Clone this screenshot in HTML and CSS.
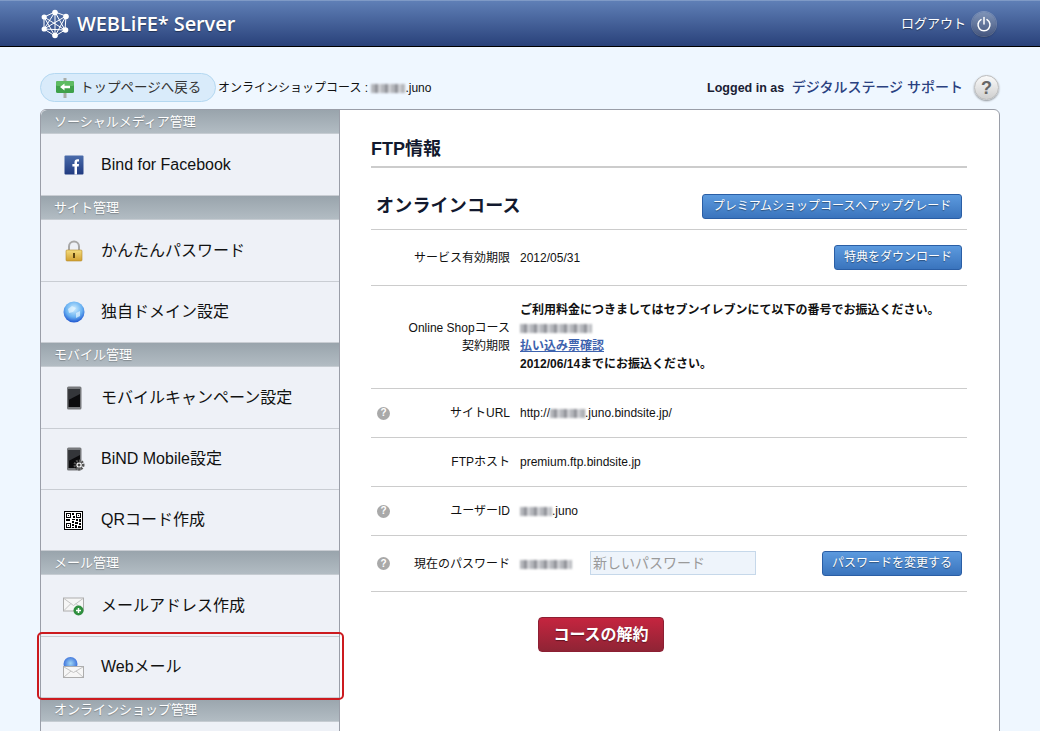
FILE: index.html
```html
<!DOCTYPE html>
<html lang="ja">
<head>
  <meta charset="UTF-8" />
  <meta name="viewport" content="width=device-width, initial-scale=1.0" />
  <title>WEBLiFE* Server</title>
  <link rel="stylesheet" href="styles.css">
</head>
<body>

  <!-- Barra superior -->
  <header class="topbar">
    <a class="logo" href="#">
      <svg class="logo-icon" width="29" height="30" viewBox="0 0 29 30">
        <g stroke="#fff" stroke-width="1" fill="none">
          <path d="M3 8 L14 3 L25 7 L24 21 L14 27 L3 20 Z"/>
          <path d="M3 8 L14 27 L25 7 L3 20 L24 21 L3 8"/>
          <path d="M14 3 L14 27 M14 3 L3 20 M14 3 L24 21"/>
        </g>
        <g fill="#fff">
          <circle cx="14" cy="3.5" r="2.8"/>
          <circle cx="25" cy="7.5" r="2.8"/>
          <circle cx="3.2" cy="8" r="2.6"/>
          <circle cx="24.5" cy="21" r="2.8"/>
          <circle cx="3.2" cy="20" r="2.6"/>
          <circle cx="14" cy="26.5" r="2.8"/>
        </g>
      </svg>
      <span class="logo-text">WEBLiFE* Server</span>
    </a>
    <a class="logout" href="#">
      <span>ログアウト</span>
      <span class="logout-btn">
        <svg width="16" height="16" viewBox="0 0 16 16" fill="none" stroke="#fff" stroke-width="1.5" stroke-linecap="round">
          <path d="M5 3.6 A6 6 0 1 0 11 3.6"/>
          <path d="M8 1.5 V8"/>
        </svg>
      </span>
    </a>
  </header>

  <div class="pagina">

    <!-- Linea de usuario -->
    <div class="barra-usuario">
      <a class="btn-volver" href="#">
        <svg width="20" height="20" viewBox="0 0 20 20">
          <rect x="8.5" y="0" width="3" height="20" fill="#a9aca6"/>
          <rect x="1" y="3" width="18" height="12" rx="1.5" fill="#3fa14a"/>
          <rect x="1" y="3" width="18" height="5" rx="1.5" fill="#5dbb62"/>
          <path d="M5 9 L9.5 5.5 V7.8 H15 V10.2 H9.5 V12.5 Z" fill="#fff"/>
        </svg>
        <span>トップページへ戻る</span>
      </a>
      <span class="curso-actual">オンラインショップコース : <span class="borroso b-nombre"></span>.juno</span>
      <span class="logged">Logged in as <a href="#">デジタルステージ サポート</a></span>
      <a class="ayuda-grande" href="#">?</a>
    </div>

    <div class="panel">

      <!-- Menu lateral -->
      <nav class="menu">
        <h3 class="menu-titulo">ソーシャルメディア管理</h3>
        <a class="menu-item" href="#">
          <svg class="menu-icono" width="22" height="22" viewBox="0 0 22 22">
            <defs><linearGradient id="fb" x1="0" y1="0" x2="0" y2="1"><stop offset="0" stop-color="#4a6cab"/><stop offset="1" stop-color="#203a80"/></linearGradient></defs>
            <rect x="1.5" y="1.5" width="19" height="19" rx="1" fill="url(#fb)"/>
            <path d="M11.5 20.5 V12.5 H9.4 V10 H11.5 V8.2 C11.5 6.2 12.7 5.2 14.4 5.2 L16 5.3 V7.6 H14.9 C14.1 7.6 14 8 14 8.6 V10 H16 L15.7 12.5 H14 V20.5 Z" fill="#fff"/>
          </svg>
          <span>Bind for Facebook</span>
        </a>

        <h3 class="menu-titulo">サイト管理</h3>
        <a class="menu-item" href="#">
          <svg class="menu-icono" width="22" height="24" viewBox="0 0 22 24">
            <defs><linearGradient id="candado" x1="0" y1="0" x2="0" y2="1"><stop offset="0" stop-color="#f4dc7d"/><stop offset="1" stop-color="#d1a030"/></linearGradient></defs>
            <path d="M6 11 V7.5 A5 5 0 0 1 16 7.5 V11" fill="none" stroke="#a8a8a8" stroke-width="2"/>
            <rect x="3" y="11" width="16" height="11" rx="1" fill="url(#candado)" stroke="#b58a2a" stroke-width=".6"/>
            <rect x="10" y="14" width="2" height="5" fill="#5b4410"/>
          </svg>
          <span>かんたんパスワード</span>
        </a>
        <a class="menu-item" href="#">
          <svg class="menu-icono" width="22" height="22" viewBox="0 0 22 22">
            <defs><radialGradient id="globo" cx=".5" cy=".35" r=".65"><stop offset="0" stop-color="#cfeeff"/><stop offset=".6" stop-color="#69b2f2"/><stop offset="1" stop-color="#1f56d0"/></radialGradient></defs>
            <circle cx="11" cy="11" r="10.5" fill="url(#globo)"/>
            <path d="M5 8 L9 5 L13 7 L10 11 L6 12 Z M13 12 L17 10 L17 15 L13 17 Z" fill="#e6f5ff" opacity=".7"/>
          </svg>
          <span>独自ドメイン設定</span>
        </a>

        <h3 class="menu-titulo">モバイル管理</h3>
        <a class="menu-item" href="#">
          <svg class="menu-icono" width="22" height="24" viewBox="0 0 22 24">
            <rect x="4" y="0.5" width="14.5" height="23" rx="1.5" fill="#77797c"/>
            <rect x="5.5" y="3" width="11.5" height="18" fill="#0b0b0d"/>
            <path d="M5.5 3 H17 V8 L5.5 14 Z" fill="#34363a"/>
          </svg>
          <span>モバイルキャンペーン設定</span>
        </a>
        <a class="menu-item" href="#">
          <svg class="menu-icono" width="22" height="24" viewBox="0 0 22 24">
            <rect x="4" y="0.5" width="14.5" height="23" rx="1.5" fill="#77797c"/>
            <rect x="5.5" y="3" width="11.5" height="18" fill="#0b0b0d"/>
            <path d="M5.5 3 H17 V8 L5.5 14 Z" fill="#34363a"/>
            <circle cx="16" cy="18" r="4" fill="none" stroke="#555" stroke-width="3" stroke-dasharray="1.6 1"/>
            <circle cx="16" cy="18" r="2.6" fill="#fff"/>
            <circle cx="16" cy="18" r="1.5" fill="#444"/>
          </svg>
          <span>BiND Mobile設定</span>
        </a>
        <a class="menu-item" href="#">
          <svg class="menu-icono menu-icono-qr" width="19" height="19" viewBox="0 0 19 19" shape-rendering="crispEdges">
            <rect width="19" height="19" fill="#000"/>
            <rect x="1" y="1" width="17" height="17" fill="#fff"/>
            <path d="M2 2 H7 V7 H2 Z M3 3 V6 H6 V3 Z M12 2 H17 V7 H12 Z M13 3 V6 H16 V3 Z M2 12 H7 V17 H2 Z M3 13 V16 H6 V13 Z" fill="#000" fill-rule="evenodd"/>
            <path d="M4 4 H5 V5 H4 Z M14 4 H15 V5 H14 Z M4 14 H5 V15 H4 Z M8 2 H10 V4 H8 Z M9 5 H11 V7 H9 Z M8 8 H11 V9 H8 Z M2 8 H6 V10 H2 Z M12 8 H14 V10 H12 Z M15 8 H17 V11 H15 Z M8 10 H10 V12 H8 Z M11 11 H14 V13 H11 Z M8 13 H10 V15 H8 Z M15 12 H17 V14 H15 Z M11 14 H13 V17 H11 Z M14 15 H17 V17 H14 Z M8 16 H10 V17 H8 Z" fill="#000"/>
          </svg>
          <span>QRコード作成</span>
        </a>

        <h3 class="menu-titulo">メール管理</h3>
        <a class="menu-item" href="#">
          <svg class="menu-icono" width="22" height="22" viewBox="0 0 22 22">
            <rect x="0.5" y="3" width="20" height="13" fill="#f6f6f6" stroke="#adadad"/>
            <path d="M1 3.5 L10.5 10.5 L20 3.5 M1 15.5 L8 8.5 M20 15.5 L13 8.5" fill="none" stroke="#c4c4c4"/>
            <circle cx="15.5" cy="15.5" r="5" fill="#2f8f3f"/>
            <path d="M13 15.5 H18 M15.5 13 V18" stroke="#fff" stroke-width="1.5"/>
          </svg>
          <span>メールアドレス作成</span>
        </a>
        <a class="menu-item menu-item-activo" href="#">
          <svg class="menu-icono" width="22" height="22" viewBox="0 0 22 22">
            <defs><radialGradient id="globo2" cx=".5" cy=".45" r=".6"><stop offset="0" stop-color="#9fd6f5"/><stop offset="1" stop-color="#2a5fd6"/></radialGradient></defs>
            <circle cx="7.5" cy="8" r="7" fill="url(#globo2)"/>
            <rect x="0.5" y="10.5" width="20" height="11" fill="#f6f6f6" stroke="#adadad"/>
            <path d="M1 11 L10.5 16.5 L20 11 M1 21 L8 15 M20 21 L13 15" fill="none" stroke="#c4c4c4"/>
          </svg>
          <span>Webメール</span>
        </a>

        <h3 class="menu-titulo">オンラインショップ管理</h3>
        <div class="menu-item"></div>
      </nav>

      <!-- Contenido -->
      <main class="contenido">
        <h1 class="titulo-pagina">FTP情報</h1>

        <div class="curso-cabecera">
          <h2>オンラインコース</h2>
          <a class="btn-azul btn-mejora" href="#">プレミアムショップコースへアップグレード</a>
        </div>

        <div class="fila fila-servicio">
          <span class="etiqueta">サービス有効期限</span>
          <span class="valor">2012/05/31</span>
          <a class="btn-azul" href="#">特典をダウンロード</a>
        </div>

        <div class="fila fila-contrato">
          <span class="etiqueta">Online Shopコース<br>契約期限</span>
          <div class="valor aviso">
            <strong>ご利用料金につきましてはセブンイレブンにて以下の番号でお振込ください。</strong><br>
            <span class="borroso b-numero"></span><br>
            <a href="#">払い込み票確認</a><br>
            <strong>2012/06/14までにお振込ください。</strong>
          </div>
        </div>

        <div class="fila">
          <span class="ayuda">?</span>
          <span class="etiqueta">サイトURL</span>
          <span class="valor">http://<span class="borroso b-sitio"></span>.juno.bindsite.jp/</span>
        </div>

        <div class="fila">
          <span class="etiqueta">FTPホスト</span>
          <span class="valor">premium.ftp.bindsite.jp</span>
        </div>

        <div class="fila">
          <span class="ayuda">?</span>
          <span class="etiqueta">ユーザーID</span>
          <span class="valor"><span class="borroso b-usuario"></span>.juno</span>
        </div>

        <div class="fila fila-clave">
          <span class="ayuda">?</span>
          <span class="etiqueta">現在のパスワード</span>
          <span class="valor"><span class="borroso b-clave"></span></span>
          <input class="campo-clave" type="text" placeholder="新しいパスワード">
          <a class="btn-azul" href="#">パスワードを変更する</a>
        </div>

        <div class="acciones">
          <a class="btn-rojo" href="#">コースの解約</a>
        </div>
      </main>
    </div>
  </div>

</body>
</html>
```

FILE: styles.css
```css
* {
  box-sizing: border-box;
}

html, body {
  height: 731px;
  overflow: hidden;
}

body {
  margin: 0;
  background-color: #eff7ff;
  color: #111;
  font-family: "Liberation Sans", "Noto Sans CJK JP", sans-serif;
  font-size: 12px;
  line-height: 18px;
}

a {
  color: inherit;
  text-decoration: none;
}

/* Barra superior */
.topbar {
  display: flex;
  align-items: center;
  justify-content: space-between;
  height: 47px;
  padding: 0 44px 0 41px;
  background: linear-gradient(#5f7fb6, #29417a);
  border-top: 1px solid #7f9ac6;
  border-bottom: 1px solid #000;
  color: #fff;
}

.logo {
  display: flex;
  align-items: center;
  gap: 7px;
}

.logo-text {
  font-family: "Open Sans", sans-serif;
  font-size: 20px;
  font-weight: 600;
  line-height: 26px;
  letter-spacing: -0.1px;
  text-shadow: 0 1px 1px rgba(0,0,0,0.4);
}

.logout {
  display: flex;
  align-items: center;
  gap: 6px;
  font-size: 13px;
  text-shadow: 0 1px 1px rgba(0,0,0,0.4);
}

.logout-btn {
  display: flex;
  align-items: center;
  justify-content: center;
  width: 24px;
  height: 24px;
  border-radius: 50%;
  background: linear-gradient(#7f94b8, #46577f);
  box-shadow: 0 0 0 1px rgba(255,255,255,0.25), 0 1px 2px rgba(0,0,0,0.5);
}

/* Linea de usuario */
.pagina {
  height: 684px;
  padding: 26px 40px 0 40px;
  overflow: hidden;
}

.barra-usuario {
  display: flex;
  align-items: center;
  height: 29px;
  margin-bottom: 7px;
}

.btn-volver {
  display: flex;
  align-items: center;
  gap: 5px;
  width: 176px;
  height: 29px;
  padding-left: 14px;
  border: 1px solid #b4d8f1;
  border-radius: 15px;
  background-color: #d9ebfa;
  color: #333;
  font-size: 13.5px;
}

.curso-actual {
  margin-left: 2px;
  font-size: 12px;
}

.logged {
  margin-left: auto;
  font-size: 12.5px;
  font-weight: bold;
  color: #1a2033;
}

.logged a {
  margin-left: 4px;
  font-weight: 500;
  font-size: 14px;
  color: #2a4180;
}

.ayuda-grande {
  display: flex;
  align-items: center;
  justify-content: center;
  width: 25px;
  height: 25px;
  margin-left: 11px;
  margin-right: 1px;
  border: 1px solid #bbb;
  border-radius: 50%;
  background: linear-gradient(#fafafa, #cfcfcf);
  box-shadow: 0 1px 2px rgba(0,0,0,0.4);
  color: #666;
  font-size: 18px;
  font-weight: bold;
}

/* Pixelado de datos ocultos */
.borroso {
  display: inline-block;
  height: 9px;
  vertical-align: -1px;
  background: repeating-linear-gradient(90deg, #b4b6bb 0 4px, #8f9197 4px 7px, #d1d2d6 7px 10px);
  filter: blur(0.8px);
}

.b-nombre { width: 34px; }
.b-numero { width: 72px; }
.b-sitio { width: 35px; }
.b-usuario { width: 32px; }
.b-clave { width: 52px; }

/* Panel principal */
.panel {
  display: flex;
  width: 960px;
  height: 700px;
  border: 1px solid #9a9ea8;
  border-radius: 6px;
  background-color: #fff;
}

.menu {
  width: 299px;
  flex-shrink: 0;
  border-right: 1px solid #9a9ea8;
  background-color: #eef1f7;
  border-radius: 6px 0 0 0;
}

.menu-titulo {
  height: 24px;
  margin: 0;
  padding-left: 13px;
  background: linear-gradient(#99a4ac, #b2bcc3);
  border-bottom: 1px solid #c6ccd2;
  color: #fff;
  font-size: 13px;
  font-weight: normal;
  line-height: 24px;
  text-shadow: 0 1px 1px rgba(0,0,0,0.25);
}

.menu-titulo:first-child {
  border-radius: 6px 0 0 0;
}

.menu-item {
  display: flex;
  align-items: center;
  height: 61px;
  padding-left: 22px;
  border-bottom: 1px solid #c9cdd3;
  color: #111;
  font-size: 16px;
  line-height: 20px;
}

.menu-titulo + .menu-item {
  height: 62px;
}

.menu-icono {
  flex-shrink: 0;
  margin-right: 16px;
}

.menu-icono-qr {
  margin-left: 1px;
  margin-right: 18px;
}

.menu-item-activo {
  position: relative;
}

/* Recuadro rojo sobre la opcion */
.menu-item-activo::after {
  content: "";
  position: absolute;
  top: -5px;
  left: -4px;
  right: -5px;
  bottom: -3px;
  border: 2px solid #cc1a1f;
  border-radius: 5px;
}

/* Contenido */
.contenido {
  flex: 1;
  padding: 24px 32px 0 31px;
}

.titulo-pagina {
  height: 34px;
  margin: 0;
  border-bottom: 2px solid #ccc;
  color: #12192e;
  font-size: 18px;
  line-height: 30px;
}

.curso-cabecera {
  display: flex;
  align-items: center;
  justify-content: space-between;
  height: 62px;
  padding: 15px 5px 0 5px;
  border-bottom: 1px solid #ccc;
}

.curso-cabecera h2 {
  margin: 0;
  color: #12192e;
  font-size: 18px;
  line-height: 24px;
  letter-spacing: 0.2px;
}

.btn-azul {
  display: inline-block;
  height: 25px;
  padding: 0 9px;
  border: 1px solid #2a5ea5;
  border-radius: 3px;
  background: linear-gradient(#5c9ade, #3a74bd);
  color: #fff;
  font-size: 12px;
  line-height: 23px;
  text-align: center;
  text-shadow: 0 1px 1px rgba(0,0,0,0.4);
  white-space: nowrap;
}

.btn-mejora {
  width: 260px;
}

.fila {
  display: flex;
  align-items: center;
  position: relative;
  height: 49px;
  padding-right: 5px;
  border-bottom: 1px solid #ccc;
  font-size: 12px;
}

.fila .btn-azul {
  margin-left: auto;
}

.etiqueta {
  width: 139px;
  flex-shrink: 0;
  text-align: right;
}

.ayuda + .etiqueta {
  width: 108px;
}

.valor {
  margin-left: 10px;
}

.ayuda {
  display: flex;
  align-items: center;
  justify-content: center;
  width: 13px;
  height: 13px;
  margin: 0 12px 0 6px;
  border-radius: 50%;
  background-color: #a9a9a9;
  color: #fff;
  font-size: 10px;
  font-weight: bold;
}

.fila-servicio {
  height: 56px;
}

.fila-contrato {
  height: 103px;
}

.aviso a {
  color: #3d62ae;
  font-weight: bold;
  text-decoration: underline;
}

.fila-clave {
  height: 56px;
}

.campo-clave {
  width: 166px;
  height: 24px;
  margin-left: 18px;
  margin-bottom: 1px;
  padding: 0 2px;
  border: 1px solid #c6d8ea;
  background-color: #eef4fb;
  font-family: inherit;
  font-size: 14px;
}

.campo-clave::placeholder {
  color: #9a9a9a;
}

.acciones {
  padding: 25px 0 0 167px;
}

.btn-rojo {
  display: inline-block;
  width: 126px;
  height: 35px;
  border: 1px solid #8c1f33;
  border-radius: 4px;
  background: linear-gradient(#c5253f, #8f2435);
  color: #fff;
  font-size: 16px;
  font-weight: bold;
  line-height: 33px;
  text-align: center;
  text-shadow: 0 1px 1px rgba(0,0,0,0.4);
}
```
